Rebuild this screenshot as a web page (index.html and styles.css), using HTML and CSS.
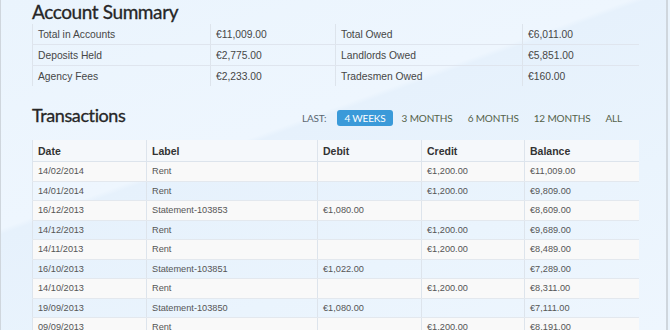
FILE: index.html
```html
<!DOCTYPE html>
<html lang="en">
<head>
  <meta charset="UTF-8" />
  <meta name="viewport" content="width=device-width, initial-scale=1.0"/>
  <title>Account Summary</title>
  <link rel="stylesheet" href="styles.css">
</head>
<body>
  <div class="page">
    <section class="summary">
      <h2>Account Summary</h2>
      <table class="summary-table">
        <colgroup>
          <col class="c1"><col class="c2"><col class="c3"><col class="c4">
        </colgroup>
        <tr>
          <td>Total in Accounts</td><td>€11,009.00</td>
          <td>Total Owed</td><td>€6,011.00</td>
        </tr>
        <tr>
          <td>Deposits Held</td><td>€2,775.00</td>
          <td>Landlords Owed</td><td>€5,851.00</td>
        </tr>
        <tr>
          <td>Agency Fees</td><td>€2,233.00</td>
          <td>Tradesmen Owed</td><td>€160.00</td>
        </tr>
      </table>
    </section>

    <section class="transactions">
      <div class="trans-head">
        <h2>Transactions</h2>
        <ul class="filter">
          <li class="label">LAST:</li>
          <li><a class="active">4 WEEKS</a></li>
          <li><a>3 MONTHS</a></li>
          <li><a>6 MONTHS</a></li>
          <li><a>12 MONTHS</a></li>
          <li><a>ALL</a></li>
        </ul>
      </div>
      <table class="trans-table">
        <colgroup>
          <col class="t1"><col class="t2"><col class="t3"><col class="t4"><col class="t5">
        </colgroup>
        <thead>
          <tr><th>Date</th><th>Label</th><th>Debit</th><th>Credit</th><th>Balance</th></tr>
        </thead>
        <tbody>
          <tr><td>14/02/2014</td><td>Rent</td><td></td><td>€1,200.00</td><td>€11,009.00</td></tr>
          <tr><td>14/01/2014</td><td>Rent</td><td></td><td>€1,200.00</td><td>€9,809.00</td></tr>
          <tr><td>16/12/2013</td><td>Statement-103853</td><td>€1,080.00</td><td></td><td>€8,609.00</td></tr>
          <tr><td>14/12/2013</td><td>Rent</td><td></td><td>€1,200.00</td><td>€9,689.00</td></tr>
          <tr><td>14/11/2013</td><td>Rent</td><td></td><td>€1,200.00</td><td>€8,489.00</td></tr>
          <tr><td>16/10/2013</td><td>Statement-103851</td><td>€1,022.00</td><td></td><td>€7,289.00</td></tr>
          <tr><td>14/10/2013</td><td>Rent</td><td></td><td>€1,200.00</td><td>€8,311.00</td></tr>
          <tr><td>19/09/2013</td><td>Statement-103850</td><td>€1,080.00</td><td></td><td>€7,111.00</td></tr>
          <tr><td>09/09/2013</td><td>Rent</td><td></td><td>€1,200.00</td><td>€8,191.00</td></tr>
        </tbody>
      </table>
    </section>
  </div>
</body>
</html>
```

FILE: styles.css
```css
body {
  margin: 0;
  font-family: 'Liberation Sans', Arial, sans-serif;
  color: #444;
  background: #eaf4fd;
}
.page {
  height: 330px;
  box-sizing: border-box;
  border-left: 1px solid #cfd6dd;
  border-right: 2px solid #cfd6dd;
  margin-right: 2px;
  padding: 0 30px 0 31px;
  overflow: hidden;
  background: linear-gradient(160deg, #eaf4fd 0%, #eef6fe 40%, #e6f1fc 41%, #eaf4fd 70%, #eef6fe 100%);
}
h2 {
  margin: 0;
  font-family: Lato, 'Liberation Sans', sans-serif;
  font-weight: normal;
  color: #262626;
  letter-spacing: -0.4px;
  -webkit-text-stroke: 0.3px #262626;
}
.summary h2 {
  font-size: 19px;
  line-height: 24px;
}
table {
  border-collapse: collapse;
  table-layout: fixed;
  width: 606px;
}
td, th {
  text-align: left;
  white-space: nowrap;
  overflow: hidden;
}

/* summary */
.summary-table td {
  height: 20px;
  padding: 0 5px;
  font-size: 10.3px;
  color: #464646;
  border-left: 1px solid #dde4ec;
  border-bottom: 1px solid #dfe5ee;
}
.summary-table tr:last-child td {
  border-bottom: none;
}
.c1 { width: 178px; }
.c2 { width: 125px; }
.c3 { width: 187px; }
.c4 { width: 116px; }

/* transactions */
.transactions {
  margin-top: 17px;
}
.trans-head {
  display: flex;
  align-items: flex-end;
  justify-content: space-between;
  padding-right: 14px;
  height: 24px;
}
.trans-head h2 {
  font-size: 18px;
  line-height: 24px;
}
.filter {
  display: flex;
  align-items: center;
  list-style: none;
  margin: 0 0 1px;
  padding: 0;
  font-family: Lato, 'Liberation Sans', sans-serif;
  font-size: 10px;
  letter-spacing: -0.15px;
}
.filter li {
  margin-left: 15px;
}
.filter .label {
  color: #5b6670;
  margin-left: 0;
  margin-right: -4px;
}
.filter li:nth-child(2) {
  margin-left: 15px;
}
.filter li:nth-child(3) {
  margin-left: 9px;
}
.filter a {
  display: block;
  padding: 2px 0;
  color: #55624a;
  border-radius: 3px;
}
.filter a.active {
  padding: 2px 7px;
  background: #3a9ad9;
  color: #fff;
}
.trans-table {
  margin-top: 13px;
}
.trans-table th {
  height: 21px;
  padding: 0 5px;
  font-size: 10.5px;
  color: #333;
  background: #f5f8fb;
  border-left: 1px solid #dde4ec;
  border-bottom: 1px solid #dde4ec;
}
.trans-table td {
  height: 18.5px;
  padding: 0 5px;
  font-size: 9.2px;
  color: #555;
  border-left: 1px solid #dde4ec;
  border-bottom: 1px solid #e3e8ee;
}
.trans-table tbody tr:nth-child(odd) td {
  background: #f9f9f9;
}
.t1 { width: 114px; }
.t2 { width: 171px; }
.t3 { width: 104px; }
.t4 { width: 103px; }
.t5 { width: 114px; }
```
